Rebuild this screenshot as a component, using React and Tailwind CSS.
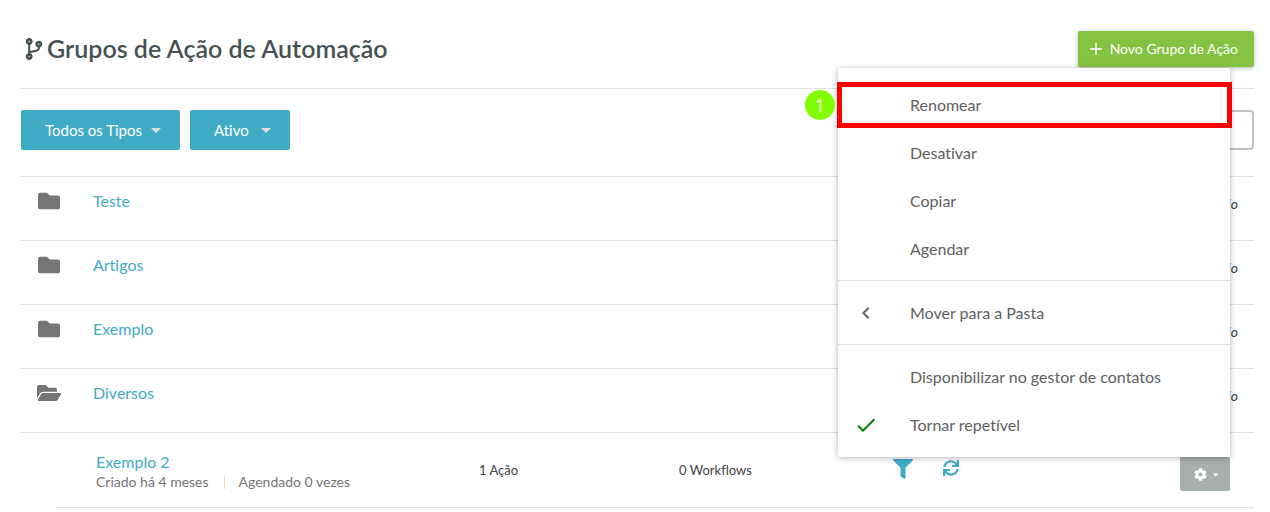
import { FaCaretDown, FaCodeBranch, FaCog, FaFilter, FaFolder, FaFolderOpen, FaSync } from "react-icons/fa";
import { MdCheck, MdChevronLeft } from "react-icons/md";

const folders = [
  { name: "Teste" },
  { name: "Artigos" },
  { name: "Exemplo" },
  { name: "Diversos", open: true },
];

const menuGroups = [
  [{ label: "Renomear", step: 1 }, { label: "Desativar" }, { label: "Copiar" }, { label: "Agendar" }],
  [{ label: "Mover para a Pasta", icon: <MdChevronLeft className="size-6 text-[#616161]" /> }],
  [
    { label: "Disponibilizar no gestor de contatos" },
    { label: "Tornar repetível", icon: <MdCheck className="size-6 text-[#008000]" /> },
  ],
];

function FilterSelect({ label, value, className }) {
  return (
    <div className={`relative ${className}`}>
      <select
        aria-label={label}
        defaultValue={value}
        className="h-10 w-full appearance-none rounded-xs bg-[#40abc4] pl-6 text-[15px] text-white"
      >
        <option>{value}</option>
      </select>
      <svg viewBox="0 0 10 5" className="pointer-events-none absolute top-[18px] right-[19px] h-[5px] w-[10px]">
        <path d="M0 0h10L5 5z" fill="#e0e0e0" />
      </svg>
    </div>
  );
}

function FolderRow({ name, open }) {
  return (
    <li className="flex h-16 items-start border-t border-[#e0e0e0] pr-4 pl-4">
      <span className="mr-8 flex h-12 w-6 items-center justify-center text-[#757575]">
        {open ? <FaFolderOpen className="size-6" /> : <FaFolder className="size-[22px]" />}
      </span>
      <a href="#" className="leading-[48px] text-[#40abc4]">{name}</a>
      <em className="ml-auto pt-[3px] text-sm leading-[48px]">Vazio</em>
    </li>
  );
}

function ActionMenu() {
  return (
    <div role="menu" className="absolute right-0 bottom-full w-[392px] rounded-xs bg-white pt-[5px] shadow-[0_1px_6px_rgba(0,0,0,0.3)]">
      {menuGroups.map((group, i) => (
        <div key={i} className="border-b border-[#e0e0e0] pt-2 pb-[7px] last:border-transparent">
          {group.map((item) => (
            <button
              key={item.label}
              role="menuitem"
              className="relative flex h-12 w-full items-center text-left text-base text-[#616161]"
            >
              <span className="flex w-14 justify-center">{item.icon}</span>
              <span className="pl-4">{item.label}</span>
              {item.step && (
                <>
                  <span className="absolute inset-y-px -right-0.5 -left-px border-[5px] border-[#ff0000]" />
                  <span className="absolute top-[9px] right-full mr-[3px] flex size-[30px] items-center justify-center rounded-full bg-[#80ff00] font-['Open_Sans',sans-serif] text-lg font-medium text-white">
                    {item.step}
                  </span>
                </>
              )}
            </button>
          ))}
        </div>
      ))}
    </div>
  );
}

function GroupRow() {
  return (
    <li className="flex border-t border-[#e0e0e0]">
      <div className="ml-[35px] flex h-[75px] flex-1 border-b border-[#e0e0e0] pl-10">
        <div className="w-[383px] pt-[19px]">
          <a href="#" className="block leading-5 text-[#40abc4]">Exemplo 2</a>
          <p className="flex text-sm leading-5 text-[#757575]">
            <span className="border-r border-transparent">Criado há 4 meses</span>
            <span className="mx-[14px] h-[13px] w-px self-center bg-[#ffcdd2]" />
            <span>Agendado 0 vezes</span>
          </p>
        </div>
        <span className="w-[200px] pt-[27px] text-[13px] leading-5">1 Ação</span>
        <span className="w-[214px] pt-[27px] text-[13px] leading-5">0 Workflows</span>
        <FaFilter className="mt-[26px] size-5 text-[#40abc4]" />
        <FaSync className="mt-[27px] ml-[30px] size-4 text-[#40abc4]" />
        <div className="relative mt-6 mr-6 ml-auto h-[34px]">
          <button
            aria-label="Opções"
            className="flex h-full w-[50px] items-center justify-center gap-1 rounded-xs bg-[#a7b0af] pl-1 text-white"
          >
            <FaCog className="size-[13px]" />
            <FaCaretDown className="size-[9px]" />
          </button>
          <ActionMenu />
        </div>
      </div>
    </li>
  );
}

export default function App() {
  return (
    <main className="bg-white pr-4 pl-[21px] font-['Lato',sans-serif] text-base text-[#424242] [font-variant-ligatures:none]">
      <header className="flex h-[89px] items-start justify-between border-b border-[#e0e0e0] pt-[31px]">
        <h1 className="flex items-center gap-[2px] pl-[2px] text-[25px] leading-[35px] font-semibold text-[#455152]">
          <FaCodeBranch className="size-[22px]" />
          Grupos de Ação de Automação
        </h1>
        <button className="flex h-9 items-center gap-2 rounded-xs bg-[#84c341] pr-4 pl-3 text-sm text-white shadow-[0_1px_4px_rgba(0,0,0,0.3)]">
          <svg viewBox="0 0 12 12" className="size-3">
            <path d="M6 0v12M0 6h12" stroke="currentColor" strokeWidth="1.5" />
          </svg>
          Novo Grupo de Ação
        </button>
      </header>
      <div className="flex gap-[10px] pt-[21px] pb-[26px]">
        <FilterSelect label="Tipo" value="Todos os Tipos" className="w-[159px]" />
        <FilterSelect label="Estado" value="Ativo" className="w-[100px]" />
        <input
          type="search"
          aria-label="Pesquisar"
          className="ml-auto h-10 w-[300px] rounded-sm border-2 border-[#bdc3c2] px-3"
        />
      </div>
      <ul>
        {folders.map((folder) => (
          <FolderRow key={folder.name} {...folder} />
        ))}
        <GroupRow />
      </ul>
    </main>
  );
}
